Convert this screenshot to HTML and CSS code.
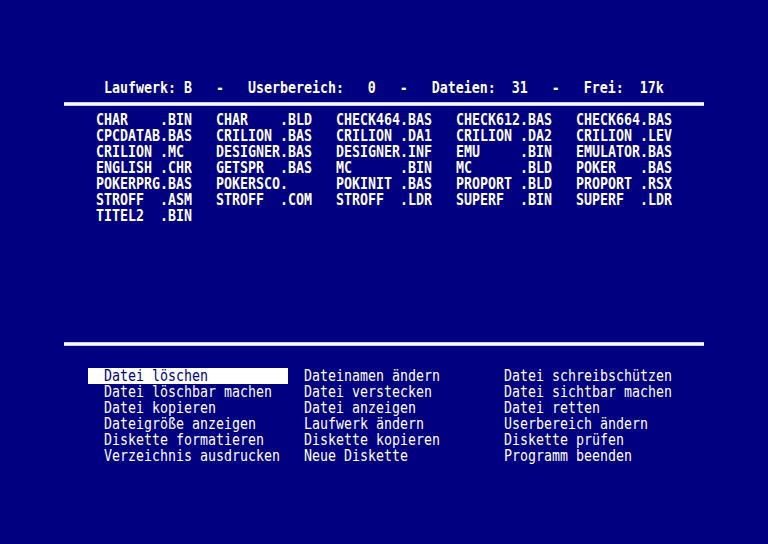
FILE: index.html
```html
<!DOCTYPE html>
<html lang="de">
<head>
<meta charset="utf-8">
<title>Disk Manager</title>
<link rel="stylesheet" href="styles.css">
</head>
<body>
<div class="screen">
  <div class="row hdr"><span class="t">Laufwerk: B   -   Userbereich:   0   -   Dateien:  31   -   Frei:  17k</span></div>
  <div class="rule"></div>
  <div class="files">
    <div class="f"><span class="t">CHAR    .BIN</span></div>
    <div class="f"><span class="t">CHAR    .BLD</span></div>
    <div class="f"><span class="t">CHECK464.BAS</span></div>
    <div class="f"><span class="t">CHECK612.BAS</span></div>
    <div class="f"><span class="t">CHECK664.BAS</span></div>
    <div class="f"><span class="t">CPCDATAB.BAS</span></div>
    <div class="f"><span class="t">CRILION .BAS</span></div>
    <div class="f"><span class="t">CRILION .DA1</span></div>
    <div class="f"><span class="t">CRILION .DA2</span></div>
    <div class="f"><span class="t">CRILION .LEV</span></div>
    <div class="f"><span class="t">CRILION .MC</span></div>
    <div class="f"><span class="t">DESIGNER.BAS</span></div>
    <div class="f"><span class="t">DESIGNER.INF</span></div>
    <div class="f"><span class="t">EMU     .BIN</span></div>
    <div class="f"><span class="t">EMULATOR.BAS</span></div>
    <div class="f"><span class="t">ENGLISH .CHR</span></div>
    <div class="f"><span class="t">GETSPR  .BAS</span></div>
    <div class="f"><span class="t">MC      .BIN</span></div>
    <div class="f"><span class="t">MC      .BLD</span></div>
    <div class="f"><span class="t">POKER   .BAS</span></div>
    <div class="f"><span class="t">POKERPRG.BAS</span></div>
    <div class="f"><span class="t">POKERSCO.</span></div>
    <div class="f"><span class="t">POKINIT .BAS</span></div>
    <div class="f"><span class="t">PROPORT .BLD</span></div>
    <div class="f"><span class="t">PROPORT .RSX</span></div>
    <div class="f"><span class="t">STROFF  .ASM</span></div>
    <div class="f"><span class="t">STROFF  .COM</span></div>
    <div class="f"><span class="t">STROFF  .LDR</span></div>
    <div class="f"><span class="t">SUPERF  .BIN</span></div>
    <div class="f"><span class="t">SUPERF  .LDR</span></div>
    <div class="f"><span class="t">TITEL2  .BIN</span></div>
  </div>
  <div class="rule rule2"></div>
  <div class="menu">
    <div class="m sel"><span class="t">Datei löschen</span></div>
    <div class="m"><span class="t">Datei löschbar machen</span></div>
    <div class="m"><span class="t">Datei kopieren</span></div>
    <div class="m"><span class="t">Dateigröße anzeigen</span></div>
    <div class="m"><span class="t">Diskette formatieren</span></div>
    <div class="m"><span class="t">Verzeichnis ausdrucken</span></div>
    <div class="m"><span class="t">Dateinamen ändern</span></div>
    <div class="m"><span class="t">Datei verstecken</span></div>
    <div class="m"><span class="t">Datei anzeigen</span></div>
    <div class="m"><span class="t">Laufwerk ändern</span></div>
    <div class="m"><span class="t">Diskette kopieren</span></div>
    <div class="m"><span class="t">Neue Diskette</span></div>
    <div class="m"><span class="t">Datei schreibschützen</span></div>
    <div class="m"><span class="t">Datei sichtbar machen</span></div>
    <div class="m"><span class="t">Datei retten</span></div>
    <div class="m"><span class="t">Userbereich ändern</span></div>
    <div class="m"><span class="t">Diskette prüfen</span></div>
    <div class="m"><span class="t">Programm beenden</span></div>
  </div>
</div>
</body>
</html>
```

FILE: styles.css
```css
html, body {
  margin: 0;
  padding: 0;
  background: #000080;
}
body {
  width: 768px;
  height: 544px;
  overflow: hidden;
  color: #ffffff;
  font-family: "DejaVu Sans Mono", "Liberation Mono", monospace;
  font-size: 13.29px;
  line-height: 16px;
}
* {
  box-sizing: border-box;
}
.screen {
  padding: 80px 64px 0 64px;
}
.t {
  display: block;
  white-space: pre;
  line-height: 12px;
  transform: scaleY(1.25);
  transform-origin: 50% 50%;
}
.row {
  height: 16px;
  padding-top: 2px;
}
.hdr {
  padding-left: 40px;
  font-weight: bold;
}
.rule {
  margin: 6px 0;
  height: 4px;
  width: 640px;
  background: #ffffff;
  border-top: 1px solid #c8c8ff;
  border-bottom: 1px solid #c8c8ff;
}
.files {
  height: 224px;
  padding-left: 32px;
  display: grid;
  grid-template-columns: repeat(5, 120px);
  grid-auto-rows: 16px;
  align-content: start;
  font-weight: bold;
}
.f {
  height: 16px;
  padding-top: 2px;
}
.menu {
  margin-top: 22px;
  padding-left: 24px;
  display: grid;
  grid-template-columns: repeat(3, 200px);
  grid-template-rows: repeat(6, 16px);
  grid-auto-flow: column;
}
.m {
  height: 16px;
  padding-left: 16px;
  padding-top: 2px;
}
.m.sel {
  background: #ffffff;
  color: #000080;
}
```
